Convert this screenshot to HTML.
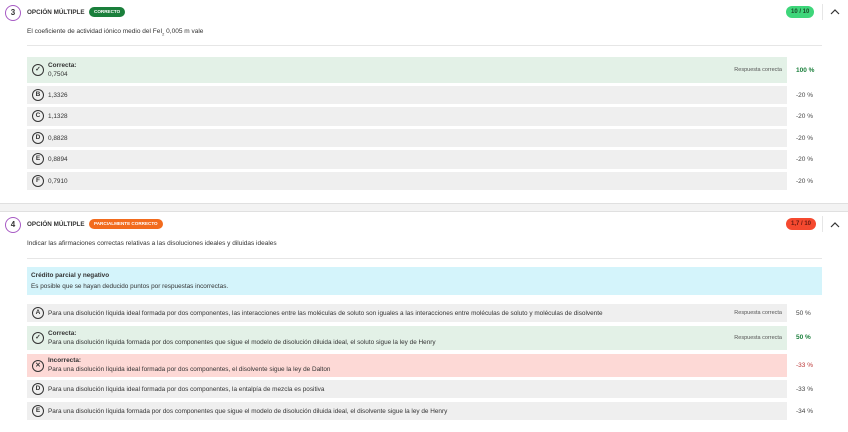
<!DOCTYPE html><html><head><style>
*{margin:0;padding:0;box-sizing:border-box}
body{width:848px;height:432px;overflow:hidden;background:#fff;font-family:"Liberation Sans",sans-serif;font-size:6.4px;color:#333;position:relative}
.a{position:absolute}
.num{width:16px;height:16px;border:1.5px solid #a75bc4;border-radius:50%;font-weight:bold;font-size:8px;text-align:center;line-height:13px;color:#333}
.tt{font-weight:bold;font-size:6.3px}
.bd{border-radius:6px;color:#fff;font-weight:bold;font-size:4.6px;padding:0 5px;height:10px;line-height:10px}
.row{position:absolute;left:27px;width:760px;background:#efefef}
.pc{position:absolute;left:796px;font-size:6.5px;color:#444}
.l{position:absolute;left:5px;width:12px;height:12px;border:1.2px solid #333;border-radius:50%;font-size:6.5px;font-weight:bold;text-align:center;line-height:10px}
.t{position:absolute;left:21px}
.rc{position:absolute;right:5px;font-size:5.5px;color:#555}
.sep{position:absolute;left:27px;width:795px;height:1px;background:#e6e6e6}
</style></head><body>
<div class="a num" style="left:5px;top:5px">3</div>
<div class="a tt" style="left:27px;top:9px">OPCIÓN MÚLTIPLE</div>
<div class="a bd" style="left:89px;top:7px;background:#1a7f3b">CORRECTO</div>
<div class="a bd" style="left:786px;top:6px;height:12px;line-height:12px;font-size:6px;background:#3ed67a;color:#1b4a2a">10 / 10</div>
<div class="a" style="left:822px;top:4px;width:1px;height:16px;background:#e6e6e6"></div>
<svg class="a" style="left:830px;top:8px" width="10" height="7"><path d="M1 6 L5 2 L9 6" stroke="#333" stroke-width="1.2" fill="none"/></svg>
<div class="a" style="left:27px;top:28px;font-size:6.5px">El coeficiente de actividad iónico medio del FeI<sub style="font-size:4px">2</sub> 0,005 m vale</div>
<div class="sep" style="top:45px"></div>

<div class="row" style="top:57px;height:26px;background:#e3f1e7"><div class="l" style="top:7px">✓</div><div class="t" style="top:5px;font-weight:bold">Correcta:</div><div class="t" style="top:14px">0,7504</div><div class="rc" style="top:10px">Respuesta correcta</div></div>
<div class="pc" style="top:67px;color:#1a7f3b;font-weight:bold">100 %</div>
<div class="row" style="top:86px;height:18px"><div class="l" style="top:3px">B</div><div class="t" style="top:6px">1,3326</div></div><div class="pc" style="top:92px">-20 %</div>
<div class="row" style="top:107px;height:19px"><div class="l" style="top:3px">C</div><div class="t" style="top:6px">1,1328</div></div><div class="pc" style="top:113px">-20 %</div>
<div class="row" style="top:129px;height:18px"><div class="l" style="top:3px">D</div><div class="t" style="top:6px">0,8828</div></div><div class="pc" style="top:135px">-20 %</div>
<div class="row" style="top:150px;height:19px"><div class="l" style="top:3px">E</div><div class="t" style="top:6px">0,8894</div></div><div class="pc" style="top:156px">-20 %</div>
<div class="row" style="top:172px;height:18px"><div class="l" style="top:3px">F</div><div class="t" style="top:6px">0,7910</div></div><div class="pc" style="top:178px">-20 %</div>

<div class="a" style="left:0;top:203px;width:848px;height:9px;background:#f3f3f3;border-top:1px solid #e0e0e0;border-bottom:1px solid #e0e0e0"></div>

<div class="a num" style="left:5px;top:217px">4</div>
<div class="a tt" style="left:27px;top:221px">OPCIÓN MÚLTIPLE</div>
<div class="a bd" style="left:89px;top:219px;background:#f26b1d">PARCIALMENTE CORRECTO</div>
<div class="a bd" style="left:786px;top:218px;height:12px;line-height:12px;font-size:6px;background:#f5492f;color:#6b1a10">1,7 / 10</div>
<div class="a" style="left:822px;top:216px;width:1px;height:16px;background:#e6e6e6"></div>
<svg class="a" style="left:830px;top:221px" width="10" height="7"><path d="M1 6 L5 2 L9 6" stroke="#333" stroke-width="1.2" fill="none"/></svg>
<div class="a" style="left:27px;top:240px;font-size:6.5px">Indicar las afirmaciones correctas relativas a las disoluciones ideales y diluidas ideales</div>
<div class="sep" style="top:258px"></div>
<div class="a" style="left:27px;top:267px;width:795px;height:28px;background:#d4f4fb"><div class="a" style="left:4px;top:5px;font-weight:bold">Crédito parcial y negativo</div><div class="a" style="left:4px;top:16px">Es posible que se hayan deducido puntos por respuestas incorrectas.</div></div>

<div class="row" style="top:304px;height:18px"><div class="l" style="top:3px">A</div><div class="t" style="top:6px">Para una disolución líquida ideal formada por dos componentes, las interacciones entre las moléculas de soluto son iguales a las interacciones entre moléculas de soluto y moléculas de disolvente</div><div class="rc" style="top:6px">Respuesta correcta</div></div><div class="pc" style="top:310px">50 %</div>
<div class="row" style="top:326px;height:24px;background:#e3f1e7"><div class="l" style="top:6px">✓</div><div class="t" style="top:4px;font-weight:bold">Correcta:</div><div class="t" style="top:13px">Para una disolución líquida formada por dos componentes que sigue el modelo de disolución diluida ideal, el soluto sigue la ley de Henry</div><div class="rc" style="top:9px">Respuesta correcta</div></div><div class="pc" style="top:334px;color:#1a7f3b;font-weight:bold">50 %</div>
<div class="row" style="top:354px;height:23px;background:#fdd9d6"><div class="l" style="top:6px">✕</div><div class="t" style="top:3px;font-weight:bold">Incorrecta:</div><div class="t" style="top:12px">Para una disolución líquida ideal formada por dos componentes, el disolvente sigue la ley de Dalton</div></div><div class="pc" style="top:362px;color:#b33">-33 %</div>
<div class="row" style="top:380px;height:18px"><div class="l" style="top:3px">D</div><div class="t" style="top:6px">Para una disolución líquida ideal formada por dos componentes, la entalpía de mezcla es positiva</div></div><div class="pc" style="top:386px">-33 %</div>
<div class="row" style="top:402px;height:18px"><div class="l" style="top:3px">E</div><div class="t" style="top:6px">Para una disolución líquida formada por dos componentes que sigue el modelo de disolución diluida ideal, el disolvente sigue la ley de Henry</div></div><div class="pc" style="top:408px">-34 %</div>
</body></html>
